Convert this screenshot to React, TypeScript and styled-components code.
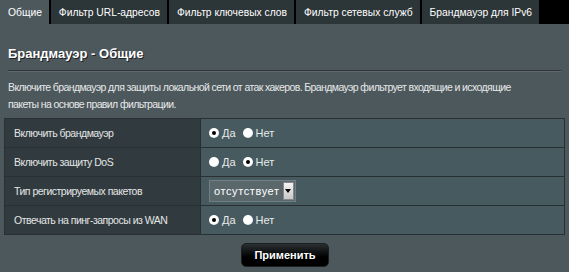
import React from "react";
import styled, { createGlobalStyle } from "styled-components";

const GlobalStyle = createGlobalStyle`
  html, body {
    margin: 0;
    padding: 0;
    background: #4d585d;
  }
  body {
    font-family: "Liberation Sans", Arial, sans-serif;
    color: #fff;
  }
`;

const Page = styled.div`
  width: 569px;
  height: 272px;
  background: #4d585d;
  overflow: hidden;
`;

const TabBar = styled.div`
  display: flex;
  height: 24px;
  background: #000;
  gap: 2px;
`;

const Tab = styled.div<{ $active?: boolean }>`
  display: flex;
  align-items: center;
  padding: 0 7px 0 8px;
  font-size: 10.3px;
  color: #fff;
  background: ${(p) => (p.$active ? "#4d585d" : "#2c3538")};
  white-space: nowrap;
`;

const Body = styled.div`
  padding: 0 4px;
`;

const Title = styled.div`
  margin: 0 4px;
  padding: 22px 0 9px;
  font-size: 13px;
  font-weight: bold;
  text-shadow: 1px 1px 0 #222;
  border-bottom: 1px solid #2e3639;
  box-shadow: 0 1px 0 #5e686c;
`;

const Description = styled.p`
  margin: 0;
  padding: 8px 4px 5px;
  max-width: 510px;
  font-size: 10.5px;
  letter-spacing: -0.6px;
  line-height: 17px;
  color: #e6e8e8;
`;

const Table = styled.div`
  display: grid;
  grid-template-columns: 196px 1fr;
  border: 1px solid #283033;
`;

const Label = styled.div`
  display: flex;
  align-items: center;
  height: 28px;
  padding-left: 9px;
  font-size: 10.5px;
  letter-spacing: -0.5px;
  color: #e4e6e6;
  background: #313b3f;
  border-right: 1px solid #283033;
  border-bottom: 1px solid #283033;
  &:nth-last-child(2) {
    border-bottom: none;
  }
`;

const Value = styled.div`
  display: flex;
  align-items: center;
  height: 28px;
  padding-left: 8px;
  background: #475a5f;
  border-bottom: 1px solid #283033;
  &:last-child {
    border-bottom: none;
  }
`;

const RadioLabel = styled.label`
  display: flex;
  align-items: center;
  margin-right: 7px;
  color: #e8eaea;
  font-size: 11px;
`;

const Dot = styled.span<{ $checked?: boolean }>`
  position: relative;
  width: 10px;
  height: 10px;
  border-radius: 50%;
  background: radial-gradient(circle at 40% 35%, #fff 55%, #cfd3d4 100%);
  margin-right: 3px;
  &::after {
    content: "";
    display: ${(p) => (p.$checked ? "block" : "none")};
    position: absolute;
    left: 3px;
    top: 3px;
    width: 4px;
    height: 4px;
    border-radius: 50%;
    background: #000;
  }
`;

const Select = styled.div`
  display: flex;
  align-items: center;
  height: 20px;
  border: 1px solid #6f7f83;
  background: #5a686c;
`;

const SelectText = styled.span`
  padding: 0 3px 0 4px;
  font-size: 11px;
  letter-spacing: 0.6px;
  color: #fff;
`;

const SelectArrow = styled.span`
  display: flex;
  align-items: center;
  justify-content: center;
  width: 9px;
  height: 16px;
  margin-right: 1px;
  background: linear-gradient(#f4f4f4, #c8c8c8);
  border: 1px solid #888;
  &::after {
    content: "";
    border-left: 3px solid transparent;
    border-right: 3px solid transparent;
    border-top: 4px solid #000;
  }
`;

const Actions = styled.div`
  display: flex;
  justify-content: center;
  padding-top: 8px;
`;

const Button = styled.button`
  width: 88px;
  height: 24px;
  margin-left: 1px;
  border: 1px solid #1a1f21;
  border-radius: 5px;
  background: linear-gradient(#2a2f31, #000 60%);
  color: #fff;
  font-family: "Liberation Sans", Arial, sans-serif;
  font-size: 11px;
  font-weight: bold;
  text-shadow: 1px 1px 0 #000;
`;

const tabs = [
  "Общие",
  "Фильтр URL-адресов",
  "Фильтр ключевых слов",
  "Фильтр сетевых служб",
  "Брандмауэр для IPv6",
];

const YesNo: React.FC<{ yes: boolean }> = ({ yes }) => (
  <>
    <RadioLabel>
      <Dot $checked={yes} />
      Да
    </RadioLabel>
    <RadioLabel>
      <Dot $checked={!yes} />
      Нет
    </RadioLabel>
  </>
);

const App: React.FC = () => (
  <Page>
    <GlobalStyle />
    <TabBar>
      {tabs.map((t, i) => (
        <Tab key={t} $active={i === 0}>
          {t}
        </Tab>
      ))}
    </TabBar>
    <Body>
      <Title>Брандмауэр - Общие</Title>
      <Description>
        Включите брандмауэр для защиты локальной сети от атак хакеров.
        Брандмауэр фильтрует входящие и исходящие пакеты на основе правил
        фильтрации.
      </Description>
      <Table>
        <Label>Включить брандмауэр</Label>
        <Value>
          <YesNo yes />
        </Value>
        <Label>Включить защиту DoS</Label>
        <Value>
          <YesNo yes={false} />
        </Value>
        <Label>Тип регистрируемых пакетов</Label>
        <Value>
          <Select>
            <SelectText>отсутствует</SelectText>
            <SelectArrow />
          </Select>
        </Value>
        <Label>Отвечать на пинг-запросы из WAN</Label>
        <Value>
          <YesNo yes />
        </Value>
      </Table>
      <Actions>
        <Button>Применить</Button>
      </Actions>
    </Body>
  </Page>
);

export default App;
